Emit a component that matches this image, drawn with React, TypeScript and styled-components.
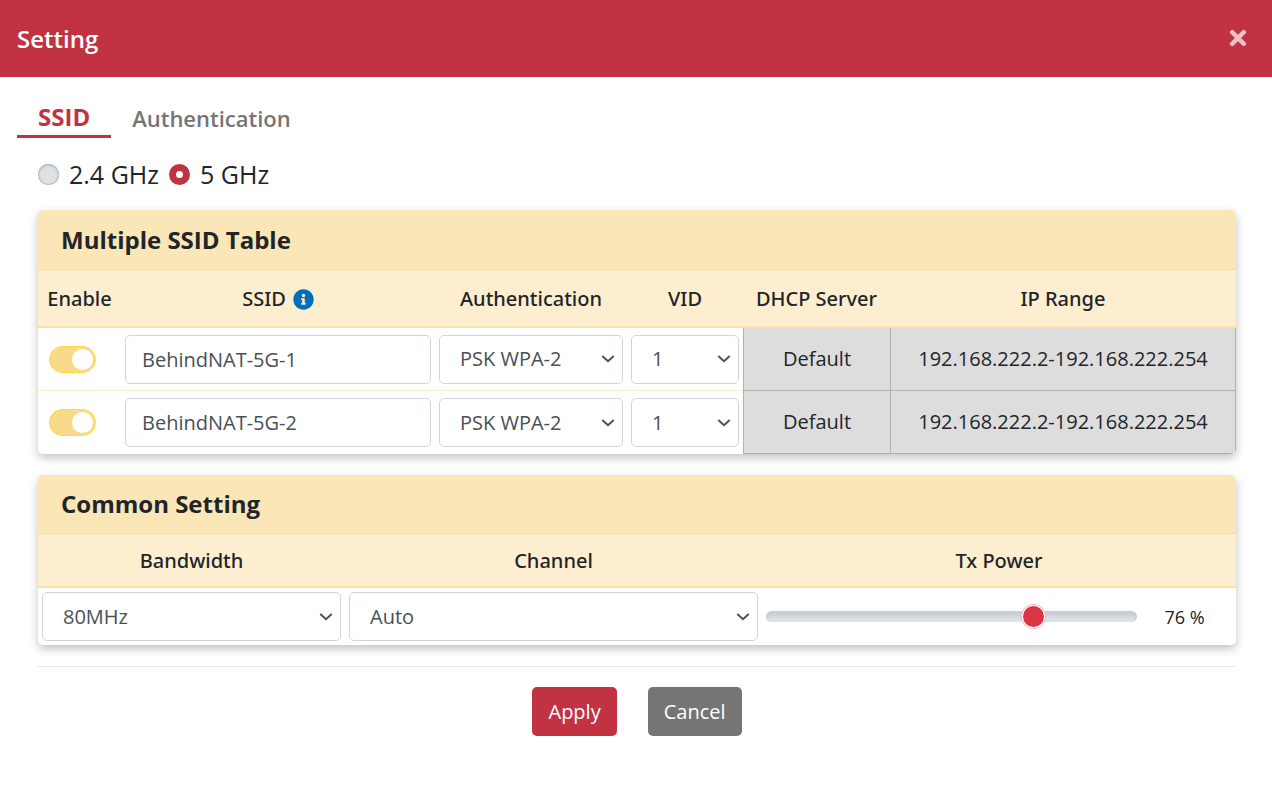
import React, { useState } from "react";
import styled, { createGlobalStyle } from "styled-components";
import { FaInfoCircle, FaTimes } from "react-icons/fa";

const color = {
  brand: "#c13342",
  text: "#212529",
  field: "#495057",
  line: "#ced4da",
  title: "#fbe6b8",
  titleLine: "#f9dc9c",
  head: "#fdeecf",
  headLine: "#fbe1a3",
  locked: "#dddddd",
  lockedLine: "#b1b1b1",
  muted: "#757575",
};

const GlobalStyle = createGlobalStyle`
  *, *::before, *::after { box-sizing: border-box; }
  body {
    margin: 0;
    background: #fff;
    color: ${color.text};
    font-family: "Open Sans", "Noto Sans", sans-serif;
    font-size: 20px;
    line-height: 30px;
  }
  button, input, select { font: inherit; margin: 0; }
`;

const Header = styled.header`
  display: flex;
  align-items: center;
  justify-content: space-between;
  height: 77px;
  padding: 0 22px 0 17px;
  background: ${color.brand};
  color: #fff;
`;

const Title = styled.h1`
  margin: 0;
  font-size: 24px;
  font-weight: 600;
`;

const CloseButton = styled.button`
  display: flex;
  padding: 0 0 2px;
  border: 0;
  background: none;
  color: #ecc2c7;
  font-size: 24px;
  cursor: pointer;
`;

const Tabs = styled.nav`
  display: flex;
  padding: 24px 17px 0;
`;

const Tab = styled.a<{ $active?: boolean }>`
  padding: ${(p) => (p.$active ? "0 21px 2px" : "1px 21px")};
  border-bottom: 3px solid ${(p) => (p.$active ? color.brand : "transparent")};
  color: ${(p) => (p.$active ? color.brand : color.muted)};
  font-size: ${(p) => (p.$active ? 24 : 22)}px;
  font-weight: ${(p) => (p.$active ? 700 : 600)};
  line-height: 32px;
  text-decoration: none;
`;

const Content = styled.main`
  padding: 0 36px 0 38px;
`;

const Bands = styled.div`
  display: flex;
  gap: 10px;
  padding: 19px 0;
`;

const BandLabel = styled.label`
  display: flex;
  align-items: center;
  gap: 10px;
  font-size: 25px;
  line-height: 34px;
`;

const Radio = styled.input`
  appearance: none;
  width: 21px;
  height: 21px;
  border-radius: 50%;
  background: #dee2e6;
  box-shadow: inset 0 1px 3px #adb5bd, inset 0 0 0 1px #b9bfc5;

  &:checked {
    background: #fff;
    box-shadow: inset 0 0 0 7px ${color.brand};
  }
`;

const Card = styled.section`
  margin-bottom: 21px;
  border-radius: 5px;
  background: #fff;
  box-shadow: 0 4px 10px rgba(0, 0, 0, 0.24);
  overflow: hidden;
`;

const CardTitle = styled.h2<{ $compact?: boolean }>`
  margin: 0;
  padding: ${(p) => (p.$compact ? 13 : 14)}px 23px 13px;
  border-bottom: 1px solid ${color.titleLine};
  background: ${color.title};
  font-size: 24px;
  font-weight: 700;
  line-height: 32px;
`;

const Table = styled.table`
  width: 100%;
  table-layout: fixed;
  border-collapse: separate;
  border-spacing: 0;
`;

const Col = styled.col<{ $width?: number }>`
  width: ${(p) => (p.$width ? `${p.$width}px` : "auto")};
`;

const HeadCell = styled.th<{ $compact?: boolean }>`
  height: ${(p) => (p.$compact ? 54 : 58)}px;
  padding: 2px 4px 0;
  border-bottom: 2px solid ${color.headLine};
  background: ${color.head};
  font-family: "Noto Sans", "Open Sans", sans-serif;
  font-weight: 500;
  white-space: nowrap;
`;

const HeadWithIcon = styled.span`
  display: flex;
  align-items: center;
  justify-content: center;
  gap: 7px;
`;

const InfoIcon = styled(FaInfoCircle)`
  color: #006fbb;
  font-size: 21px;
`;

const Cell = styled.td`
  padding: 0 4px;
  text-align: center;
`;

const SsidRow = styled.tr`
  height: 63px;

  &:not(:last-child) > td {
    border-bottom: 1px solid ${color.head};
  }
`;

const LockedCell = styled(Cell)`
  &&& {
    border-left: 1px solid ${color.lockedLine};
    border-bottom: 1px solid ${color.lockedLine};
  }
  &&&:last-child {
    border-right: 1px solid ${color.lockedLine};
  }
  background: ${color.locked};
`;

const SettingRow = styled.tr`
  height: 57px;
`;

const Switch = styled.input`
  appearance: none;
  display: flex;
  align-items: center;
  width: 47px;
  height: 27px;
  margin-left: 7px;
  padding: 0 2px;
  border: 1px solid #fdda3c;
  border-radius: 14px;
  background: #fad98b;

  &::before {
    content: "";
    width: 21px;
    height: 21px;
    border-radius: 50%;
    background: #fff;
  }
  &:checked {
    justify-content: flex-end;
  }
`;

const TextField = styled.input`
  display: block;
  width: 100%;
  height: 49px;
  padding: 0 16px;
  border: 1px solid ${color.line};
  border-radius: 5px;
  background: #fff;
  color: ${color.field};
`;

const SelectBox = styled.div`
  display: grid;
  align-items: center;

  > * {
    grid-area: 1 / 1;
  }
`;

const NativeSelect = styled.select`
  appearance: none;
  width: 100%;
  height: 49px;
  padding: 0 28px 0 20px;
  border: 1px solid ${color.line};
  border-radius: 5px;
  background: #fff;
  color: ${color.field};
`;

const Chevron = styled.svg`
  justify-self: end;
  width: 14px;
  height: 10px;
  margin-right: 8px;
  fill: none;
  stroke: ${color.field};
  stroke-width: 2;
  pointer-events: none;
`;

const Power = styled.div`
  display: flex;
  align-items: center;
`;

const Slider = styled.input`
  appearance: none;
  flex: 1;
  min-width: 0;
  height: 25px;
  background: none;

  &::-webkit-slider-runnable-track {
    height: 11px;
    border-radius: 6px;
    background: #dee2e6;
    box-shadow: inset 0 5px 5px rgba(0, 0, 0, 0.1);
  }
  &::-webkit-slider-thumb {
    appearance: none;
    width: 21px;
    height: 21px;
    margin-top: -5px;
    border-radius: 50%;
    background: #dc3545;
    box-shadow: 0 0 0 1px #fff, 0 0 0 2px #f3b9bf;
  }
`;

const PowerValue = styled.output`
  width: 95px;
  font-size: 18px;
  text-align: center;
`;

const Actions = styled.div`
  display: flex;
  justify-content: center;
  gap: 31px;
  padding: 20px 0;
  border-top: 1px solid #e6e6e6;
`;

const ActionButton = styled.button<{ $primary?: boolean }>`
  height: 49px;
  padding: 1px 16px 0;
  border: 0;
  border-radius: 5px;
  background: ${(p) => (p.$primary ? color.brand : color.muted)};
  color: #fff;
  cursor: pointer;
`;

function Select({ label, options }: { label: string; options: string[] }) {
  return (
    <SelectBox>
      <NativeSelect aria-label={label}>
        {options.map((o) => (
          <option key={o}>{o}</option>
        ))}
      </NativeSelect>
      <Chevron viewBox="0 0 14 10" aria-hidden="true">
        <path d="M1.3 2 L7 7.2 L12.7 2" />
      </Chevron>
    </SelectBox>
  );
}

const networks = [
  { ssid: "BehindNAT-5G-1", auth: "PSK WPA-2", vid: "1", dhcp: "Default", range: "192.168.222.2-192.168.222.254" },
  { ssid: "BehindNAT-5G-2", auth: "PSK WPA-2", vid: "1", dhcp: "Default", range: "192.168.222.2-192.168.222.254" },
];

export default function App() {
  const [power, setPower] = useState(76);

  return (
    <>
      <GlobalStyle />
      <Header>
        <Title>Setting</Title>
        <CloseButton type="button" aria-label="Close">
          <FaTimes />
        </CloseButton>
      </Header>
      <Tabs>
        <Tab href="#ssid" $active>SSID</Tab>
        <Tab href="#authentication">Authentication</Tab>
      </Tabs>
      <Content>
        <Bands>
          <BandLabel>
            <Radio type="radio" name="band" />
            2.4 GHz
          </BandLabel>
          <BandLabel>
            <Radio type="radio" name="band" defaultChecked />
            5 GHz
          </BandLabel>
        </Bands>

        <Card>
          <CardTitle>Multiple SSID Table</CardTitle>
          <Table>
            <colgroup>
              <Col $width={83} />
              <Col />
              <Col $width={192} />
              <Col $width={116} />
              <Col $width={147} />
              <Col $width={346} />
            </colgroup>
            <thead>
              <tr>
                <HeadCell>Enable</HeadCell>
                <HeadCell>
                  <HeadWithIcon>
                    SSID <InfoIcon aria-hidden="true" />
                  </HeadWithIcon>
                </HeadCell>
                <HeadCell>Authentication</HeadCell>
                <HeadCell>VID</HeadCell>
                <HeadCell>DHCP Server</HeadCell>
                <HeadCell>IP Range</HeadCell>
              </tr>
            </thead>
            <tbody>
              {networks.map((n) => (
                <SsidRow key={n.ssid}>
                  <Cell>
                    <Switch type="checkbox" defaultChecked aria-label={`Enable ${n.ssid}`} />
                  </Cell>
                  <Cell>
                    <TextField type="text" defaultValue={n.ssid} aria-label="SSID" />
                  </Cell>
                  <Cell>
                    <Select label="Authentication" options={[n.auth]} />
                  </Cell>
                  <Cell>
                    <Select label="VID" options={[n.vid]} />
                  </Cell>
                  <LockedCell>{n.dhcp}</LockedCell>
                  <LockedCell>{n.range}</LockedCell>
                </SsidRow>
              ))}
            </tbody>
          </Table>
        </Card>

        <Card>
          <CardTitle $compact>Common Setting</CardTitle>
          <Table>
            <colgroup>
              <Col $width={307} />
              <Col />
              <Col $width={474} />
            </colgroup>
            <thead>
              <tr>
                <HeadCell $compact>Bandwidth</HeadCell>
                <HeadCell $compact>Channel</HeadCell>
                <HeadCell $compact>Tx Power</HeadCell>
              </tr>
            </thead>
            <tbody>
              <SettingRow>
                <Cell>
                  <Select label="Bandwidth" options={["80MHz"]} />
                </Cell>
                <Cell>
                  <Select label="Channel" options={["Auto"]} />
                </Cell>
                <Cell>
                  <Power>
                    <Slider
                      type="range"
                      min={10}
                      max={100}
                      value={power}
                      onChange={(e) => setPower(Number(e.target.value))}
                      aria-label="Tx Power"
                    />
                    <PowerValue>{power} %</PowerValue>
                  </Power>
                </Cell>
              </SettingRow>
            </tbody>
          </Table>
        </Card>

        <Actions>
          <ActionButton type="submit" $primary>Apply</ActionButton>
          <ActionButton type="button">Cancel</ActionButton>
        </Actions>
      </Content>
    </>
  );
}
